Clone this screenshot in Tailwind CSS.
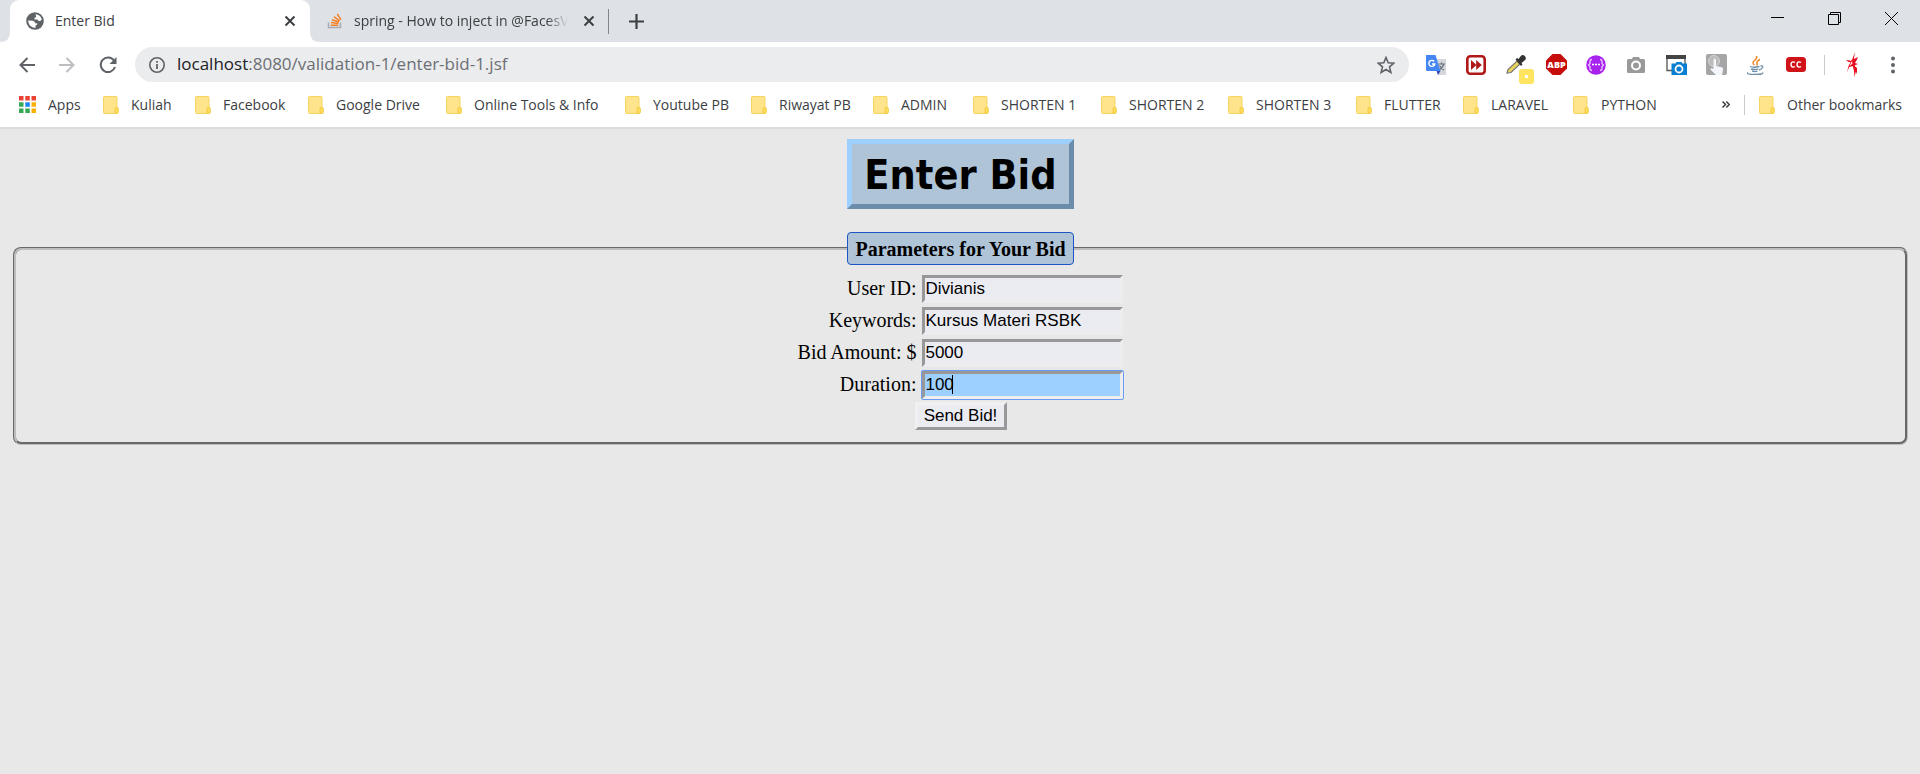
<!DOCTYPE html>
<html lang="en">
<head>
<meta charset="utf-8">
<title>Enter Bid</title>
<script src="https://cdn.jsdelivr.net/npm/@tailwindcss/browser@4"></script>
</head>
<body class="flex min-h-screen flex-col bg-[#e8e8e8] font-['Open_Sans',sans-serif] text-sm text-[#3c4043]">
<svg class="hidden">
  <symbol id="folder" viewBox="0 0 16 18">
    <rect x=".5" y=".5" width="13.5" height="17" rx="1" fill="#ffe48c" stroke="#f6d55f"/>
    <path d="M12 17.500v-5q0-1 1.200-1h1q1.200 0 1.200 1.200v3.300q0 1.500-1.500 1.500z" fill="#ffdc5c" stroke="#f0c740" stroke-width=".8"/>
  </symbol>
  <symbol id="close" viewBox="0 0 12 12"><path d="M1.500 1.500l9 9m0-9l-9 9" stroke="#3c4043" stroke-width="2" fill="none"/></symbol>
</svg>

<header>
  <div class="flex h-[42px] bg-[#dee1e6]">
    <div class="relative ml-[10px] flex h-[42px] w-[300px] items-center rounded-t-[9px] bg-white pr-[14px] pl-4">
      <svg class="absolute bottom-0 -left-[10px] size-[10px]" viewBox="0 0 10 10"><path d="M10 0v10H0Q10 10 10 0z" fill="#fff"/></svg>
      <svg class="absolute -right-[10px] bottom-0 size-[10px]" viewBox="0 0 10 10"><path d="M0 0v10h10Q0 10 0 0z" fill="#fff"/></svg>
      <svg class="size-[18px]" viewBox="0 0 18 18"><circle cx="9" cy="9" r="8.800" fill="#5f6368"/><path d="M9.500 2.200q5 .3 6.300 5.300-1.300 2-3.300 1.500l-1-1.500H8.500V5.700l1.800-.6zM2 8.500l5 .3q2 .7 2.200 2.500h2q.4 2-1.600 2.200l-.2 2.400Q3 15.500 2 8.500z" fill="#fff"/></svg>
      <span class="ml-[11px] flex-1">Enter Bid</span>
      <button aria-label="Close Enter Bid"><svg class="size-3"><use href="#close"/></svg></button>
    </div>
    <div class="flex h-[42px] w-[298px] items-center pr-[13px] pl-[17px]">
      <svg class="size-4" viewBox="0 0 16 16"><path d="M1.500 9.500v5h12v-5" fill="none" stroke="#a9adb2" stroke-width="1.500"/><path d="M3.800 12.300h7.500M4 9.600l7.400 1M5 6.700l7 2.300M7 3.600l5.700 4.400M10.300 1l3.700 5.800" stroke="#f48024" stroke-width="1.500"/></svg>
      <span class="ml-[11px] whitespace-nowrap [mask-image:linear-gradient(90deg,#000_90%,transparent)]">spring - How to inject in @FacesV</span>
      <button class="ml-auto" aria-label="Close spring tab"><svg class="size-3"><use href="#close"/></svg></button>
    </div>
    <div class="mt-[9px] h-[25px] w-px bg-[#80868b]"></div>
    <button class="ml-5" aria-label="New tab"><svg class="size-[15px]" viewBox="0 0 15 15"><path d="M7.500 0v15M0 7.500h15" stroke="#3c4043" stroke-width="2.200"/></svg></button>
    <div class="ml-auto flex h-9">
      <button class="grid w-[57px] place-items-center" aria-label="Minimize"><svg class="h-[13px] w-[13px]" viewBox="0 0 13 13"><path d="M0 5.500h13" stroke="#000"/></svg></button>
      <button class="grid w-[57px] place-items-center" aria-label="Restore"><svg class="size-[13px]" viewBox="0 0 13 13" fill="none" stroke="#000"><path d="M.5 2.500h10v10H.5zM2.500 2.500v-2h10v10h-2"/></svg></button>
      <button class="grid w-[57px] place-items-center" aria-label="Close window"><svg class="size-[13px]" viewBox="0 0 13 13"><path d="M0 0l13 13M13 0L0 13" stroke="#000"/></svg></button>
    </div>
  </div>

  <div class="flex h-[45px] items-center bg-white">
    <nav class="flex w-[135px] gap-6 pl-[19px]">
      <button aria-label="Back"><svg class="size-4" viewBox="0 0 16 16" fill="none" stroke="#5f6368" stroke-width="2"><path d="M16 8H1.500M8.500 1L1.500 8l7 7"/></svg></button>
      <button aria-label="Forward"><svg class="size-4" viewBox="0 0 16 16" fill="none" stroke="#bcbec1" stroke-width="2"><path d="M0 8h14.500M7.500 1l7 7-7 7"/></svg></button>
      <button aria-label="Reload"><svg class="size-[18px]" viewBox="0 0 18 18"><path d="M15 4.500A7.300 7.300 0 1 0 16 11" fill="none" stroke="#5f6368" stroke-width="2"/><path d="M17.500 1v7h-7z" fill="#5f6368"/></svg></button>
    </nav>
    <div class="flex h-[35px] flex-1 items-center rounded-full bg-[#ebecee] pr-[14px] pl-[14px]">
      <svg class="size-4" viewBox="0 0 16 16"><circle cx="8" cy="8" r="7.200" fill="none" stroke="#5f6368" stroke-width="1.600"/><path d="M8 7v5M8 4v1.700" stroke="#5f6368" stroke-width="1.800"/></svg>
      <span class="ml-3 flex-1 text-[17px] text-[#6b6f74]"><span class="text-[#202124]">localhost</span>:8080/validation-1/enter-bid-1.jsf</span>
      <button aria-label="Bookmark this page"><svg class="size-[18px]" viewBox="0 0 18 18"><path d="M9 1.500l2.200 5.300 5.700.4-4.400 3.700 1.400 5.600L9 13.500l-4.900 3 1.400-5.600L1.100 7.200l5.700-.4z" fill="none" stroke="#5f6368" stroke-width="1.600"/></svg></button>
    </div>
    <div class="ml-[7px] flex *:grid *:h-9 *:w-10 *:place-items-center">
      <button aria-label="Translate"><svg class="size-5" viewBox="0 0 20 20"><path d="M8 4h12v16h-8z" fill="#d5d7da"/><path d="M12.500 9h6.500M15.500 7.500V9m2.200 0q-1 4-4.200 5.500M13.500 10.500q1.500 3 4.500 4.500" stroke="#65737c" stroke-width="1.200" fill="none"/><path d="M0 0h9.500l5 16H1.500Q0 16 0 14.500z" fill="#4486f4"/><path d="M10.500 16h4l-2.500 4z" fill="#3048b8"/><path d="M8.200 6.500A3 3 0 1 0 8.800 9H6" fill="none" stroke="#fff" stroke-width="1.400"/></svg></button>
      <button aria-label="Fast forward"><svg class="size-5" viewBox="0 0 20 20"><rect x="1.300" y="1.300" width="17.400" height="17.400" rx="3" fill="#fff" stroke="#b01818" stroke-width="2.600"/><path d="M5 5l5.500 5L5 15zM10.200 5l5.600 5-5.600 5z" fill="#b01818"/></svg></button>
      <button aria-label="Color picker" class="relative"><svg class="size-5" viewBox="0 0 20 20"><path d="M1 18l1-3.500L11 6l3 3-9 8.500z" fill="#e8d45c" stroke="#777" stroke-width="1.200"/><path d="M9.500 4.500l1.500-1.500 1.500 1 2.500-3.200Q17-.8 19 1.300 21 3.500 18.500 5.500L15.500 8l1 1.500L15 11z" fill="#333"/></svg><span class="absolute top-[22px] left-[23px] grid size-[15px] place-items-center rounded-[3px] bg-[#ffe55f]"><span class="size-[3px] bg-white"></span></span></button>
      <button aria-label="Adblock Plus"><svg class="size-[21px]" viewBox="0 0 21 21"><path d="M6.500 0h8L21 6.500v8L14.500 21h-8L0 14.500v-8z" fill="#c70d0c"/><text x="10.500" y="14" text-anchor="middle" font-family="Open Sans" font-size="9" font-weight="800" fill="#fff">ABP</text></svg></button>
      <button aria-label="Code extension"><svg class="size-5" viewBox="0 0 20 20"><circle cx="10" cy="10" r="9.800" fill="#a823ee"/><path d="M6 4.500q-2 0-2 2v2L2.500 10 4 11.500v2q0 2 2 2M14 4.500q2 0 2 2v2l1.500 1.500-1.500 1.500v2q0 2-2 2" fill="none" stroke="#ecc8ff" stroke-width="1.300"/><path d="M6 9.500h2m1 0h2m1 0h2" stroke="#fff" stroke-width="1.600"/></svg></button>
      <button aria-label="Screenshot"><svg class="size-[18px]" viewBox="0 0 18 18"><path d="M0 4.500Q0 3 1.500 3H5l1-2h6l1 2h3.500Q18 3 18 4.500v11q0 1.500-1.500 1.500h-15Q0 17 0 15.500z" fill="#999"/><circle cx="9" cy="9.500" r="4" fill="none" stroke="#fff" stroke-width="2"/></svg></button>
      <button aria-label="Window capture"><svg class="h-5 w-[21px]" viewBox="0 0 21 20"><path d="M1 1.500h18V10M1 1.500v14h5" fill="none" stroke="#555" stroke-width="1.300"/><path d="M0 0h20v4H0z" fill="#444"/><path d="M5.500 8.500h4l1-1.500h5l1 1.500H21V20H5.500z" fill="#087fd0"/><circle cx="13" cy="14" r="3.500" fill="none" stroke="#fff" stroke-width="1.800"/></svg></button>
      <button aria-label="Click tool"><svg class="size-[21px]" viewBox="0 0 21 21"><rect width="21" height="21" rx="2" fill="#a6a6a6"/><circle cx="8" cy="7" r="5.500" fill="#bbb" stroke="#d5d5d5"/><path d="M7.500 6Q7.500 4.500 8.700 4.500T10 6v6l5 1q2.500.5 2 3l-1 5h-6L4.500 15.500q.5-2 3-.5z" fill="#f3f7fb"/></svg></button>
      <button aria-label="Java"><svg class="size-5" viewBox="0 0 20 20" fill="none"><path d="M10.500 1q1 2-2 4.500T8.500 10M14 4.500q-4 2-3 3.500t-.5 2.500" stroke="#ee8a2c" stroke-width="1.500"/><path d="M4 11.500q4 1.500 9.500 0M5 14q4 1 7.500 0M6 16.200q3 .8 5.500 0M14.500 11q3-.5 2 1.500T13 15M2 17.500q-2 2 7 2t7.500-2" stroke="#6f8fa8" stroke-width="1.300"/></svg></button>
      <button aria-label="Captions"><svg class="h-[15px] w-5" viewBox="0 0 20 15"><rect width="20" height="15" rx="3.500" fill="#d01219"/><path d="M9 5.500Q8 4.800 7 4.900 5 5.200 5 7.500t2 2.600q1 .1 2-.6M15 5.500q-1-.7-2-.6-2 .3-2 2.600t2 2.600q1 .1 2-.6" fill="none" stroke="#fff" stroke-width="1.400"/></svg></button>
    </div>
    <div class="ml-2 h-5 w-px bg-[#c8cacd]"></div>
    <button class="ml-5" aria-label="Profile"><svg class="h-[26px] w-4" viewBox="0 0 16 26" fill="#e81020"><path d="M10 0l-1 6 1 8 1 5-1.500 6-.5-6-1.500-6L7 8zM8 7L5 13 2 20.500 3.500 14 6.500 8zM9 7l4-2-1 2.500L10 11l3 1-5 2-5 1.500L7 12l1-1zM1 8l4 .5L7 10H3.500zM9.500 14l2.500 2v6l-1.500-3z"/></svg></button>
    <button class="mr-[25px] ml-[30px]" aria-label="Menu"><svg class="h-[18px] w-1" viewBox="0 0 4 18" fill="#5f6368"><circle cx="2" cy="2.500" r="2"/><circle cx="2" cy="9" r="2"/><circle cx="2" cy="15.500" r="2"/></svg></button>
  </div>

  <div class="flex h-[42px] items-center border-b-2 border-[#dadbdf] bg-white pr-[18px] pb-[5px] pl-[19px]">
    <nav class="grid grid-cols-[84px_92px_113px_138px_179px_126px_122px_100px_128px_127px_128px_107px_110px_100px] whitespace-nowrap *:flex *:items-center *:gap-3">
      <a href="#"><svg class="size-[17px]" viewBox="0 0 17 17"><path d="M0 0h4.500v4.500H0zM6.300 0h4.500v4.500H6.300zM12.500 0H17v4.500h-4.500z" fill="#ea4335"/><path d="M0 6.300h4.500v4.500H0zM0 12.500h4.500V17H0zM6.300 12.500h4.500V17H6.300z" fill="#34a853"/><path d="M6.300 6.300h4.500v4.500H6.300z" fill="#1a87f0"/><path d="M12.500 6.300H17v4.500h-4.500zM12.500 12.500H17V17h-4.500z" fill="#fbb005"/></svg>Apps</a>
      <a href="#"><svg class="h-[18px] w-4"><use href="#folder"/></svg>Kuliah</a>
      <a href="#"><svg class="h-[18px] w-4"><use href="#folder"/></svg>Facebook</a>
      <a href="#"><svg class="h-[18px] w-4"><use href="#folder"/></svg>Google Drive</a>
      <a href="#"><svg class="h-[18px] w-4"><use href="#folder"/></svg>Online Tools &amp; Info</a>
      <a href="#"><svg class="h-[18px] w-4"><use href="#folder"/></svg>Youtube PB</a>
      <a href="#"><svg class="h-[18px] w-4"><use href="#folder"/></svg>Riwayat PB</a>
      <a href="#"><svg class="h-[18px] w-4"><use href="#folder"/></svg>ADMIN</a>
      <a href="#"><svg class="h-[18px] w-4"><use href="#folder"/></svg>SHORTEN 1</a>
      <a href="#"><svg class="h-[18px] w-4"><use href="#folder"/></svg>SHORTEN 2</a>
      <a href="#"><svg class="h-[18px] w-4"><use href="#folder"/></svg>SHORTEN 3</a>
      <a href="#"><svg class="h-[18px] w-4"><use href="#folder"/></svg>FLUTTER</a>
      <a href="#"><svg class="h-[18px] w-4"><use href="#folder"/></svg>LARAVEL</a>
      <a href="#"><svg class="h-[18px] w-4"><use href="#folder"/></svg>PYTHON</a>
    </nav>
    <button class="ml-auto" aria-label="More bookmarks"><svg class="h-[7px] w-2" viewBox="0 0 8 7" fill="none" stroke="#3c4043" stroke-width="1.500"><path d="M.5.500l3 3-3 3M4.300.500l3 3-3 3"/></svg></button>
    <div class="ml-[14px] h-5 w-px bg-[#c8cacd]"></div>
    <a href="#" class="ml-[14px] flex items-center gap-3 whitespace-nowrap"><svg class="h-[18px] w-4"><use href="#folder"/></svg>Other bookmarks</a>
  </div>
</header>

<main class="pt-[10px] pr-3 pl-[13px] font-['Liberation_Serif',serif] text-[20px] text-black">
  <h1 class="mx-auto w-fit border-5 border-t-[#9dcfff] border-r-[#6b8caa] border-b-[#6b8caa] border-l-[#9dcfff] bg-[#b0c4d8] px-3 pt-[7px] pb-[5px] font-['DejaVu_Sans_Condensed','DejaVu_Sans',sans-serif] text-[41px] leading-12 font-bold">Enter Bid</h1>
  <form class="mt-[23px]">
    <fieldset class="rounded-[8px] border-3 border-[#bdbdbd] pb-3 [border-style:groove]">
      <legend class="mx-auto rounded-[4px] border border-[#1d55c4] bg-[#b0c4d8] px-[7px] pt-[5px] pb-[3px] leading-[23px] font-bold">Parameters for Your Bid</legend>
      <div class="mx-auto mt-[10px] grid w-fit grid-cols-[auto_201px] gap-x-1.5 gap-y-1 text-right leading-[26px]">
        <label for="user">User ID:</label>
        <input id="user" value="Divianis" class="block h-7 w-full border-3 border-t-[#989898] border-r-[#ededed] border-b-[#ededed] border-l-[#989898] bg-[#ebebf2] pb-px font-['Liberation_Sans',sans-serif] text-[17px] leading-5">
        <label for="keywords">Keywords:</label>
        <input id="keywords" value="Kursus Materi RSBK" class="block h-7 w-full border-3 border-t-[#989898] border-r-[#ededed] border-b-[#ededed] border-l-[#989898] bg-[#ebebf2] pb-px font-['Liberation_Sans',sans-serif] text-[17px] leading-5">
        <label for="amount">Bid Amount: $</label>
        <input id="amount" value="5000" class="block h-7 w-full border-3 border-t-[#989898] border-r-[#ededed] border-b-[#ededed] border-l-[#989898] bg-[#ebebf2] pb-px font-['Liberation_Sans',sans-serif] text-[17px] leading-5">
        <label for="duration">Duration:</label>
        <div class="relative h-7">
          <input id="duration" value="100" class="block h-7 w-full rounded-[1px] border-3 border-t-[#989898] border-r-[#ededed] border-b-[#ededed] border-l-[#989898] bg-[#9dcfff] pb-px font-['Liberation_Sans',sans-serif] text-[17px] leading-5 outline-1 outline-[#6b9cf5]">
          <span class="absolute top-1 left-[30px] h-[19px] w-px bg-black"></span>
        </div>
      </div>
      <button type="button" class="mx-auto mt-[3px] block h-7 w-[92px] border-3 border-t-[#f0f0f0] border-r-[#999] border-b-[#999] border-l-[#f0f0f0] bg-[#ebebf2] font-['Liberation_Sans',sans-serif] text-[17px] leading-5">Send Bid!</button>
    </fieldset>
  </form>
</main>
</body>
</html>
